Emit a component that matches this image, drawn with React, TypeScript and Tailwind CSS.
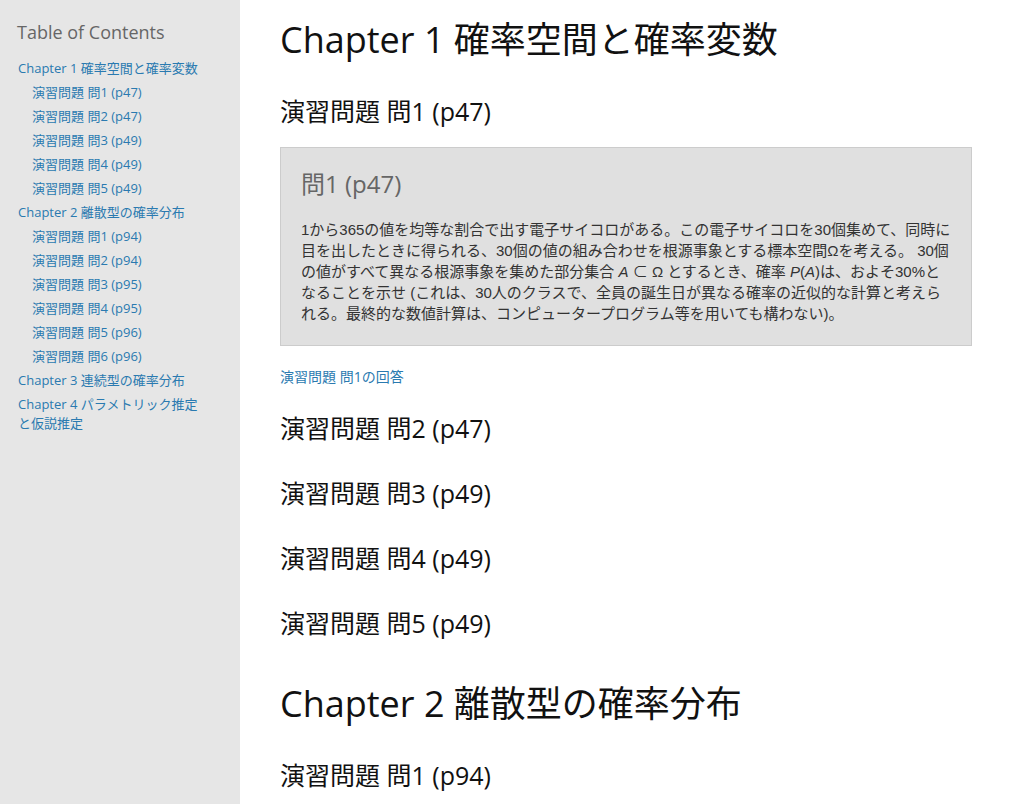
import React from 'react';

const font = { fontFamily: '"Open Sans", "Noto Sans CJK JP", sans-serif' };

const toc = [
  {
    title: 'Chapter 1 確率空間と確率変数',
    items: ['演習問題 問1 (p47)', '演習問題 問2 (p47)', '演習問題 問3 (p49)', '演習問題 問4 (p49)', '演習問題 問5 (p49)'],
  },
  {
    title: 'Chapter 2 離散型の確率分布',
    items: ['演習問題 問1 (p94)', '演習問題 問2 (p94)', '演習問題 問3 (p95)', '演習問題 問4 (p95)', '演習問題 問5 (p96)', '演習問題 問6 (p96)'],
  },
  { title: 'Chapter 3 連続型の確率分布', items: [] },
  { title: 'Chapter 4 パラメトリック推定と仮説推定', items: [] },
];

export default function App() {
  return (
    <div className="flex min-h-screen bg-white" style={font}>
      {/* Sidebar */}
      <aside className="w-[240px] flex-shrink-0 bg-[#e6e6e6] pl-[17px] pr-[34px] pt-[20px]">
        <h2 className="text-[18px] leading-[24px] text-[#666] mb-[12px]">Table of Contents</h2>
        <nav className="text-[13px] leading-[24px] text-[#2a7ab0]">
          {toc.map((c) => (
            <div key={c.title}>
              <div className="pl-[1px] leading-[19px] py-[2.5px]">{c.title}</div>
              {c.items.map((i) => (
                <div key={i} className="pl-[15px]">{i}</div>
              ))}
            </div>
          ))}
        </nav>
      </aside>

      {/* Main */}
      <main className="flex-1 pl-[40px] pr-[40px] pt-[16px] text-[#111]">
        <h1 className="text-[36px] leading-[48px]">Chapter 1 確率空間と確率変数</h1>
        <h2 className="text-[25px] leading-[32px] mt-[31px]">演習問題 問1 (p47)</h2>
        <div className="mt-[20px] bg-[#e0e0e0] border border-[#cccccc] px-[20px] pt-[20px] pb-[21px]">
          <h3 className="text-[24px] leading-[32px] text-[#666]">問1 (p47)</h3>
          <p
            className="mt-[19px] text-[15px] leading-[21px] text-[#333]"
            style={{ fontFamily: '"Liberation Sans", "Noto Sans CJK JP", sans-serif' }}
          >
            1から365の値を均等な割合で出す電子サイコロがある。この電子サイコロを30個集めて、同時に目を出したときに得られる、30個の値の組み合わせを根源事象とする標本空間Ωを考える。 30個の値がすべて異なる根源事象を集めた部分集合 <i>A</i> ⊂ Ω とするとき、確率 <i>P</i>(<i>A</i>)は、およそ30%となることを示せ (これは、30人のクラスで、全員の誕生日が異なる確率の近似的な計算と考えられる。最終的な数値計算は、コンピュータープログラム等を用いても構わない)。
          </p>
        </div>
        <div className="mt-[21px] text-[14px] leading-[20px] text-[#2a7ab0]">演習問題 問1の回答</div>
        <h2 className="text-[25px] leading-[32px] mt-[25px]">演習問題 問2 (p47)</h2>
        <h2 className="text-[25px] leading-[32px] mt-[33px]">演習問題 問3 (p49)</h2>
        <h2 className="text-[25px] leading-[32px] mt-[33px]">演習問題 問4 (p49)</h2>
        <h2 className="text-[25px] leading-[32px] mt-[33px]">演習問題 問5 (p49)</h2>
        <h1 className="text-[36px] leading-[48px] mt-[41px]">Chapter 2 離散型の確率分布</h1>
        <h2 className="text-[25px] leading-[32px] mt-[31px]">演習問題 問1 (p94)</h2>
      </main>
    </div>
  );
}
